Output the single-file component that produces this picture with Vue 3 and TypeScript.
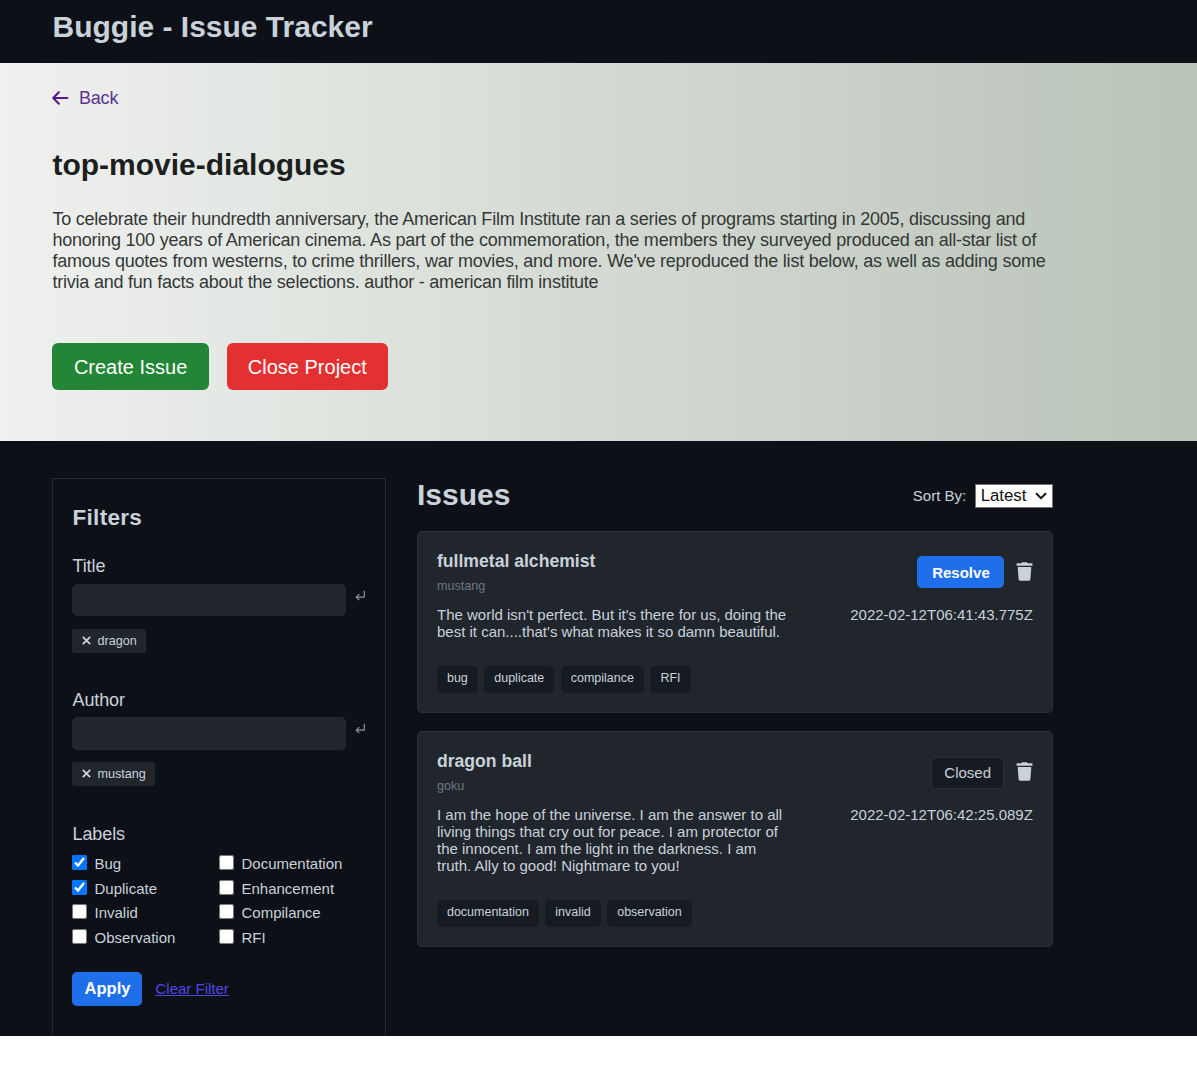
<script setup lang="ts">
import { reactive, ref } from 'vue'

interface Issue {
  title: string
  author: string
  text: string
  labels: string[]
  date: string
  closed: boolean
}

const issues: Issue[] = [
  {
    title: 'fullmetal alchemist',
    author: 'mustang',
    text: "The world isn't perfect. But it's there for us, doing the best it can....that's what makes it so damn beautiful.",
    labels: ['bug', 'duplicate', 'compilance', 'RFI'],
    date: '2022-02-12T06:41:43.775Z',
    closed: false,
  },
  {
    title: 'dragon ball',
    author: 'goku',
    text: 'I am the hope of the universe. I am the answer to all living things that cry out for peace. I am protector of the innocent. I am the light in the darkness. I am truth. Ally to good! Nightmare to you!',
    labels: ['documentation', 'invalid', 'observation'],
    date: '2022-02-12T06:42:25.089Z',
    closed: true,
  },
]

const fields = [
  { name: 'Title', tag: 'dragon' },
  { name: 'Author', tag: 'mustang' },
]

const labels = reactive([
  { name: 'Bug', on: true },
  { name: 'Documentation', on: false },
  { name: 'Duplicate', on: true },
  { name: 'Enhancement', on: false },
  { name: 'Invalid', on: false },
  { name: 'Compilance', on: false },
  { name: 'Observation', on: false },
  { name: 'RFI', on: false },
])

const sort = ref('Latest')
</script>

<template>
  <div class="page">
    <header class="top"><h1>Buggie - Issue Tracker</h1></header>

    <section class="hero">
      <a class="back">
        <svg width="17" height="14" viewBox="0 0 17 14"><path d="M6.9 1.2 1.2 7l5.7 5.8M1.4 7H15.4" /></svg>
        <span>Back</span>
      </a>
      <h2>top-movie-dialogues</h2>
      <p class="about">To celebrate their hundredth anniversary, the American Film Institute ran a series of programs starting in 2005, discussing and honoring 100 years of American cinema. As part of the commemoration, the members they surveyed produced an all-star list of famous quotes from westerns, to crime thrillers, war movies, and more. We've reproduced the list below, as well as adding some trivia and fun facts about the selections. author - american film institute</p>
      <div class="actions">
        <button class="big create">Create Issue</button>
        <button class="big close">Close Project</button>
      </div>
    </section>

    <main class="body">
      <aside class="filters">
        <h3>Filters</h3>
        <div v-for="f in fields" :key="f.name" class="field" :class="f.name.toLowerCase()">
          <div class="name">{{ f.name }}</div>
          <div class="entry">
            <input type="text" />
            <svg width="11" height="12" viewBox="0 0 11 12"><path d="M9.3.8v6.4H1.5M4.3 4.2l-3 3 3 3" /></svg>
          </div>
          <span class="chip">
            <svg width="9" height="9" viewBox="0 0 9 9"><path d="M.8.8l7.4 7.4M8.2.8.8 8.2" /></svg>
            {{ f.tag }}
          </span>
        </div>
        <div class="name">Labels</div>
        <div class="checks">
          <label v-for="l in labels" :key="l.name">
            <input v-model="l.on" type="checkbox" /><span>{{ l.name }}</span>
          </label>
        </div>
        <div class="apply-row">
          <button class="apply">Apply</button>
          <a class="clear">Clear Filter</a>
        </div>
      </aside>

      <section class="issues">
        <div class="issues-head">
          <h2>Issues</h2>
          <div class="sort">
            <span>Sort By:</span>
            <div class="select">
              <select v-model="sort"><option>Latest</option><option>Oldest</option></select>
              <svg width="12" height="8" viewBox="0 0 12 8"><path d="M1 1.2l5 5 5-5" /></svg>
            </div>
          </div>
        </div>
        <article v-for="i in issues" :key="i.title" class="card">
          <div class="left">
            <h4>{{ i.title }}</h4>
            <div class="author-name">{{ i.author }}</div>
            <p>{{ i.text }}</p>
            <div class="tags"><span v-for="t in i.labels" :key="t">{{ t }}</span></div>
          </div>
          <div class="right">
            <div class="controls">
              <span v-if="i.closed" class="closed">Closed</span>
              <button v-else class="resolve">Resolve</button>
              <svg width="17" height="19" viewBox="0 0 17 19">
                <path d="M.6 1.3h4.7L6.2.3h4.6l.9 1h4.7v2.4H.6zM1.7 4.9h13.6l-.9 12.3a1.7 1.7 0 0 1-1.7 1.5H4.3a1.7 1.7 0 0 1-1.7-1.5z" />
              </svg>
            </div>
            <time>{{ i.date }}</time>
          </div>
        </article>
      </section>
    </main>
  </div>
</template>

<style>
body { margin: 0; background: #fff; }
</style>

<style scoped>
.page { font-family: "Liberation Sans", Arial, sans-serif; color: #c9d1d9; font-size: 15px; line-height: 17px; }
.page * { box-sizing: border-box; }
h1, h2, h3, h4, p { margin: 0; }
button, input, select { font-family: inherit; }
button { border: 0; padding: 0; color: #fff; }
svg { display: block; flex: none; }

.top { height: 63px; background: #0d1117; padding-left: 52.5px; }
h1 { font-size: 30px; line-height: 53px; }

.hero { height: 378px; padding: 25px 0 0 52.4px; background: linear-gradient(90deg, #eff1ef, #b9c3b7); }
.back { display: flex; align-items: center; gap: 9.6px; height: 21px; font-size: 18px; line-height: 21px; letter-spacing: -0.2px; color: #5c3391; }
.back svg { margin-bottom: 1px; fill: none; stroke: #551a8b; stroke-width: 2; stroke-linecap: round; stroke-linejoin: round; }
.hero h2 { margin-top: 38px; font-size: 30px; line-height: 36px; color: #1c1f1d; }
.about { width: 1000px; margin-top: 26px; font-size: 18px; line-height: 21px; letter-spacing: -0.217px; color: #343836; }
.actions { display: flex; gap: 18px; margin-top: 50px; }
.big { height: 47px; padding-top: 1px; border-radius: 6px; font-size: 20px; }
.create { width: 156.4px; background: #238636; }
.close { width: 161px; background: #e33131; }

.body { height: 595px; overflow: hidden; display: flex; align-items: flex-start; background: #0d1117; padding: 37px 0 0 52.4px; }
.filters { width: 333.2px; height: 600px; border: 1px solid #262b32; padding: 25px 18px 0 19.1px; }
h3 { font-size: 22.5px; line-height: 27px; margin-bottom: 24px; letter-spacing: 0.3px; }
.name { font-size: 18px; line-height: 21px; letter-spacing: -0.1px; }
.field { height: 135px; }
.title .name { padding-top: 1px; margin-bottom: -1px; }
.author { height: 134px; }
.entry { display: flex; gap: 9px; margin-top: 8px; }
.author .entry { margin-top: 6px; }
.entry input { width: 274px; height: 32px; border: 1px solid #24282f; border-radius: 5px; background: #21262d; }
.author .entry input { height: 33px; }
.entry svg { margin-top: 6px; fill: none; stroke: #8b949e; stroke-width: 1.2; }
.chip { display: flex; align-items: center; gap: 6.5px; width: max-content; height: 24px; margin-top: 13px; padding: 0 9.5px; border-radius: 3px; background: #21262d; font-size: 12.6px; }
.author .chip { margin-top: 12px; }
.chip svg { margin-bottom: 2px; fill: none; stroke: #c9d1d9; stroke-width: 1.8; }
.checks { display: grid; grid-template-columns: 147px 1fr; grid-auto-rows: 24.5px; margin-top: 6.4px; }
.checks label { display: flex; align-items: center; gap: 7px; }
.checks input { width: 15px; height: 15px; margin: 0 0 2px; }
.apply-row { display: flex; align-items: center; gap: 13px; margin-top: 22.6px; }
.apply { width: 70px; height: 34px; border-radius: 5px; background: #1f6feb; font-size: 16.5px; font-weight: 700; }
.clear { color: #4f46e5; text-decoration: underline; }

.issues { width: 635.7px; margin-left: 31.4px; }
.issues-head { display: flex; justify-content: space-between; height: 53px; }
.issues-head h2 { font-size: 30px; line-height: 34px; }
.sort { display: flex; align-items: center; gap: 9px; height: 35px; }
.select { position: relative; }
.select select { display: block; appearance: none; width: 77.5px; height: 24px; padding: 0 0 0 4.5px; border: 1px solid #767676; border-radius: 0; background: #fff; color: #111; font-size: 16.8px; line-height: 20px; }
.select svg { position: absolute; right: 6px; top: 8px; fill: none; stroke: #111; stroke-width: 2; pointer-events: none; }
.card { display: flex; justify-content: space-between; margin-bottom: 18px; padding: 19px 18.2px 19px 19px; border: 1px solid #2b3037; border-radius: 5px; background: #21262d; }
.left { width: 357px; }
h4 { font-size: 17.6px; line-height: 21px; }
.author-name { margin-top: 7px; font-size: 12.6px; line-height: 15px; color: #6e7681; }
.card p { margin: 12px 0 26.3px; }
.tags { display: flex; gap: 6.5px; }
.tags span { height: 26.5px; line-height: 25px; padding: 0 10px; border-radius: 5px; background: #161b22; font-size: 12.5px; letter-spacing: -0.01px; }
.right { display: flex; flex-direction: column; align-items: flex-end; padding-top: 5px; }
.controls { display: flex; gap: 12px; height: 32px; }
.controls svg { margin-top: 6px; fill: #c9d1d9; }
.resolve { width: 87px; height: 32px; padding-top: 1px; border-radius: 5px; background: #1f6feb; font-size: 15px; font-weight: 700; }
.closed { width: 73.5px; height: 32px; margin-top: 1px; line-height: 30px; text-align: center; border: 1px solid #2b3037; border-radius: 5px; background: #161b22; }
time { margin: 18px 0.6px 0 0; }
</style>
